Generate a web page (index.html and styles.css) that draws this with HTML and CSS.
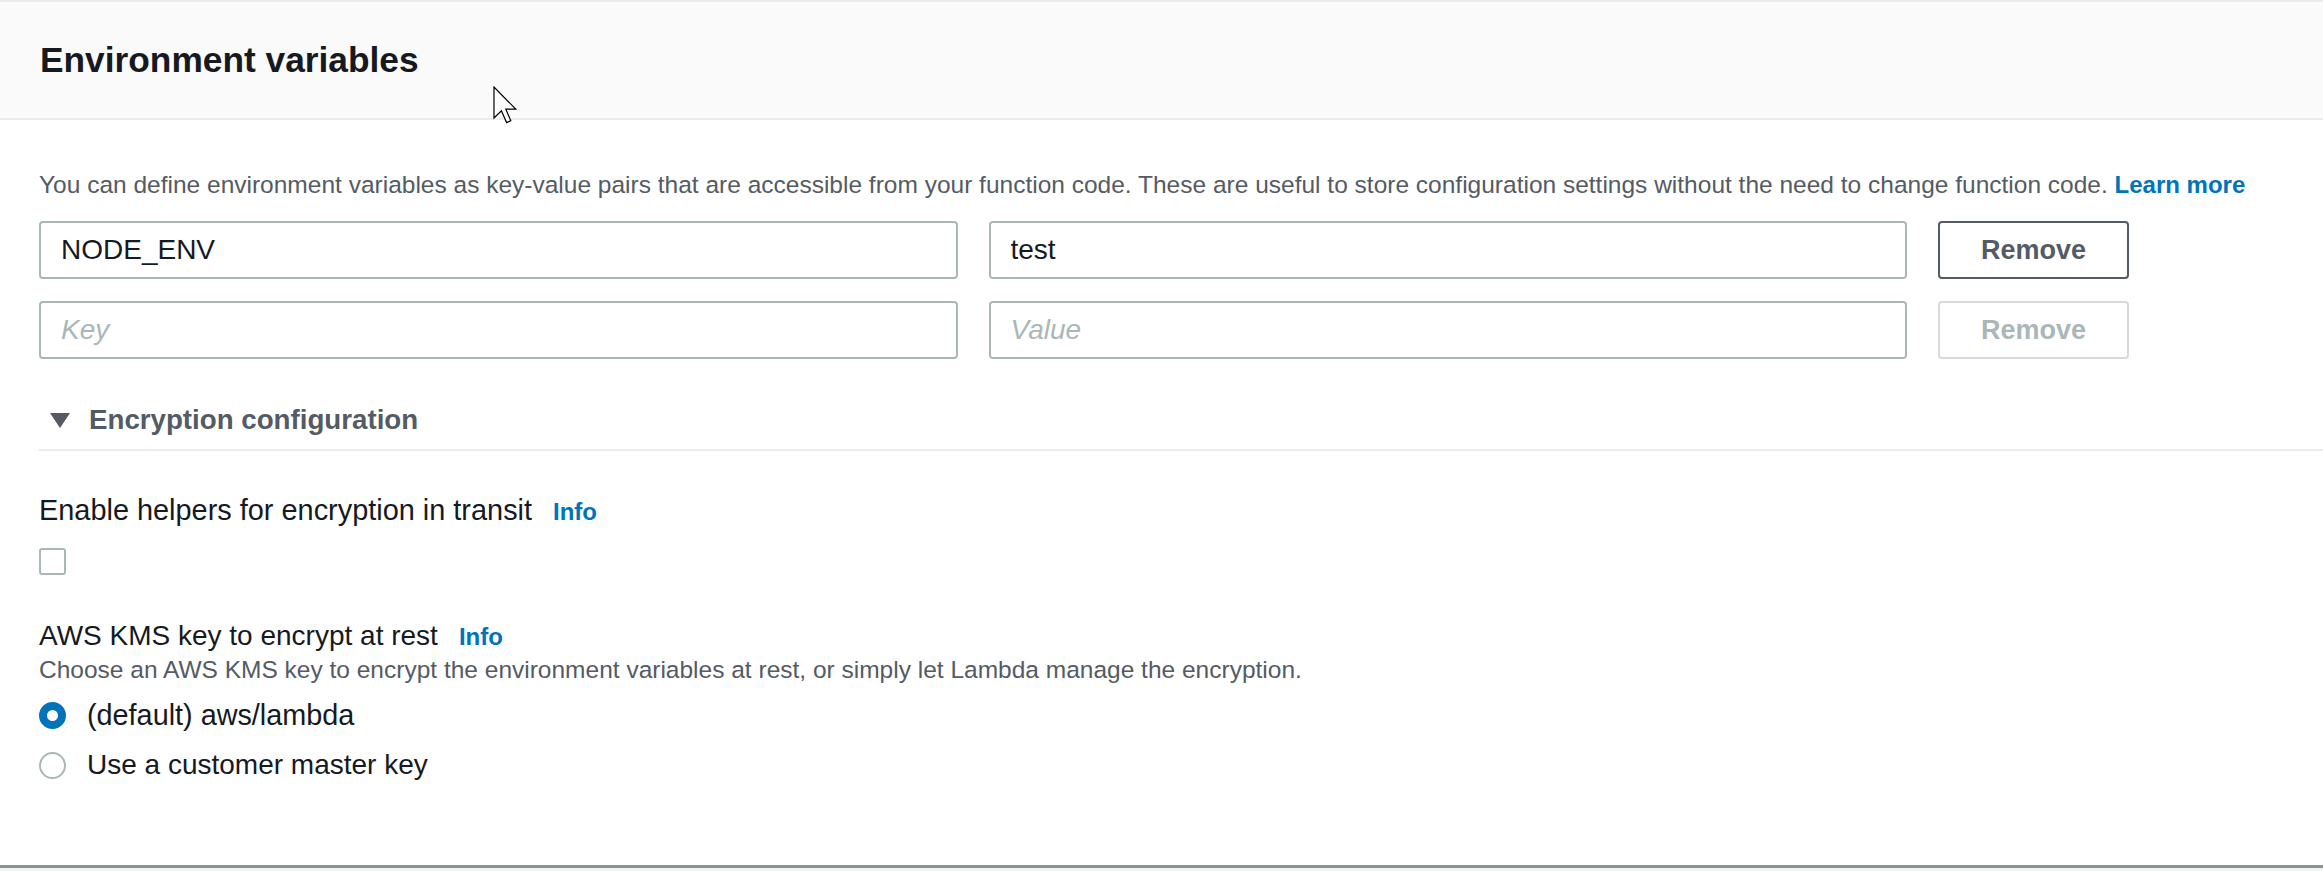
FILE: index.html
```html
<!DOCTYPE html>
<html lang="en">
<head>
<meta charset="utf-8">
<title>Environment variables</title>
<link rel="stylesheet" href="styles.css">
</head>
<body>
<div class="card">
  <div class="card-header">
    <h2 class="title">Environment variables</h2>
  </div>
  <div class="card-body">
    <p class="desc">You can define environment variables as key-value pairs that are accessible from your function code. These are useful to store configuration settings without the need to change function code. <a class="link" href="#">Learn more</a></p>
    <div class="env-grid">
      <input class="field" type="text" value="NODE_ENV">
      <input class="field" type="text" value="test">
      <button class="btn" type="button">Remove</button>
      <input class="field" type="text" placeholder="Key">
      <input class="field" type="text" placeholder="Value">
      <button class="btn btn-disabled" type="button" disabled>Remove</button>
    </div>
    <div class="expander">
      <span class="caret"></span>
      <span class="expander-text">Encryption configuration</span>
    </div>
    <div class="form-field form-field-first">
      <div class="label-row">
        <span class="label label-wide">Enable helpers for encryption in transit</span>
        <a class="info" href="#">Info</a>
      </div>
      <input class="checkbox" type="checkbox" aria-label="Enable helpers for encryption in transit">
    </div>
    <div class="form-field form-field-kms">
      <div class="label-row">
        <span class="label">AWS KMS key to encrypt at rest</span>
        <a class="info" href="#">Info</a>
      </div>
      <p class="field-desc">Choose an AWS KMS key to encrypt the environment variables at rest, or simply let Lambda manage the encryption.</p>
      <div class="radio-group">
        <label class="radio-row"><input class="radio" type="radio" name="kms" checked><span class="radio-label-wide">(default) aws/lambda</span></label>
        <label class="radio-row"><input class="radio" type="radio" name="kms"><span>Use a customer master key</span></label>
      </div>
    </div>
  </div>
</div>
<svg class="cursor" width="24" height="38" viewBox="0 0 12 19" aria-hidden="true">
  <path d="M0.5 0.5 L0.5 16 L4.2 12.4 L6.8 18.3 L8.9 17.4 L6.4 11.6 L11.4 11.6 Z" fill="#fff" stroke="#000" stroke-width="0.6" stroke-linejoin="miter"/>
</svg>
</body>
</html>
```
FILE: styles.css
```css
html {
  background: #f2f3f3;
}
body {
  margin: 0;
  font-family: "Liberation Sans", Arial, sans-serif;
  color: #16191f;
  position: relative;
  min-height: 871px;
}
.card {
  background: #ffffff;
  border-top: 2px solid #eaeded;
}
.card-header {
  background: #fafafa;
  padding: 38px 40px;
  border-bottom: 2px solid #eaeded;
}
.title {
  margin: 0;
  font-size: 35.3px;
  line-height: 40px;
  font-weight: 700;
  color: #16191f;
}
.card-body {
  padding: 49px 0 82px 39px;
  border-bottom: 3px solid #879596;
}
.desc {
  margin: 0 0 20px;
  font-size: 24.5px;
  line-height: 32px;
  color: #545b64;
  white-space: nowrap;
}
.link, .info {
  color: #0073bb;
  font-weight: 700;
  text-decoration: none;
}
.link {
  font-size: 24px;
}
.env-grid {
  display: grid;
  width: 2090px;
  grid-template-columns: 1fr 1fr 191px;
  grid-auto-rows: 58px;
  column-gap: 31px;
  row-gap: 22px;
}
.field {
  box-sizing: border-box;
  height: 58px;
  margin: 0;
  padding: 0 20px;
  border: 2px solid #aab7b8;
  border-radius: 4px;
  background: #fff;
  font-family: "Liberation Sans", Arial, sans-serif;
  font-size: 28px;
  color: #16191f;
  outline: none;
}
.field::placeholder {
  color: #aab7b8;
  font-style: italic;
}
.btn {
  box-sizing: border-box;
  height: 58px;
  margin: 0;
  padding: 0;
  border: 2px solid #545b64;
  border-radius: 4px;
  background: #fff;
  font-family: "Liberation Sans", Arial, sans-serif;
  font-size: 27px;
  font-weight: 700;
  color: #545b64;
}
.btn-disabled {
  border-color: #d5dbdb;
  color: #aab7b8;
}
.expander {
  display: flex;
  align-items: center;
  margin-top: 43px;
  padding: 0 0 11px 11px;
  border-bottom: 2px solid #eaeded;
  font-size: 27.7px;
  line-height: 36px;
  font-weight: 700;
  color: #545b64;
}
.caret {
  width: 0;
  height: 0;
  border-left: 10px solid transparent;
  border-right: 10px solid transparent;
  border-top: 15px solid #545b64;
  margin-right: 19px;
}
.form-field-first {
  margin-top: 41px;
}
.form-field-kms {
  margin-top: 43px;
}
.label-row {
  display: flex;
  align-items: baseline;
  font-size: 28px;
  line-height: 36px;
}
.label {
  color: #16191f;
}
.label-wide {
  font-size: 28.9px;
}
.info {
  font-size: 24px;
  margin-left: 21px;
}
.checkbox {
  appearance: none;
  -webkit-appearance: none;
  display: block;
  box-sizing: border-box;
  width: 27px;
  height: 27px;
  margin: 18px 0 0;
  border: 2px solid #aab7b8;
  border-radius: 3px;
  background: #fff;
}
.field-desc {
  margin: -2px 0 0;
  font-size: 24.5px;
  line-height: 34px;
  color: #545b64;
}
.radio-group {
  display: flex;
  flex-direction: column;
  gap: 14px;
  margin-top: 10px;
}
.radio-row {
  display: flex;
  align-items: center;
  gap: 21px;
  font-size: 28px;
  line-height: 36px;
  color: #16191f;
}
.radio-label-wide {
  font-size: 28.8px;
}
.radio {
  appearance: none;
  -webkit-appearance: none;
  box-sizing: border-box;
  width: 27px;
  height: 27px;
  margin: 0;
  border: 2px solid #aab7b8;
  border-radius: 50%;
  background: #fff;
}
.radio:checked {
  border: 8px solid #0073bb;
}
.cursor {
  position: absolute;
  top: 86px;
  left: 493px;
}
```
